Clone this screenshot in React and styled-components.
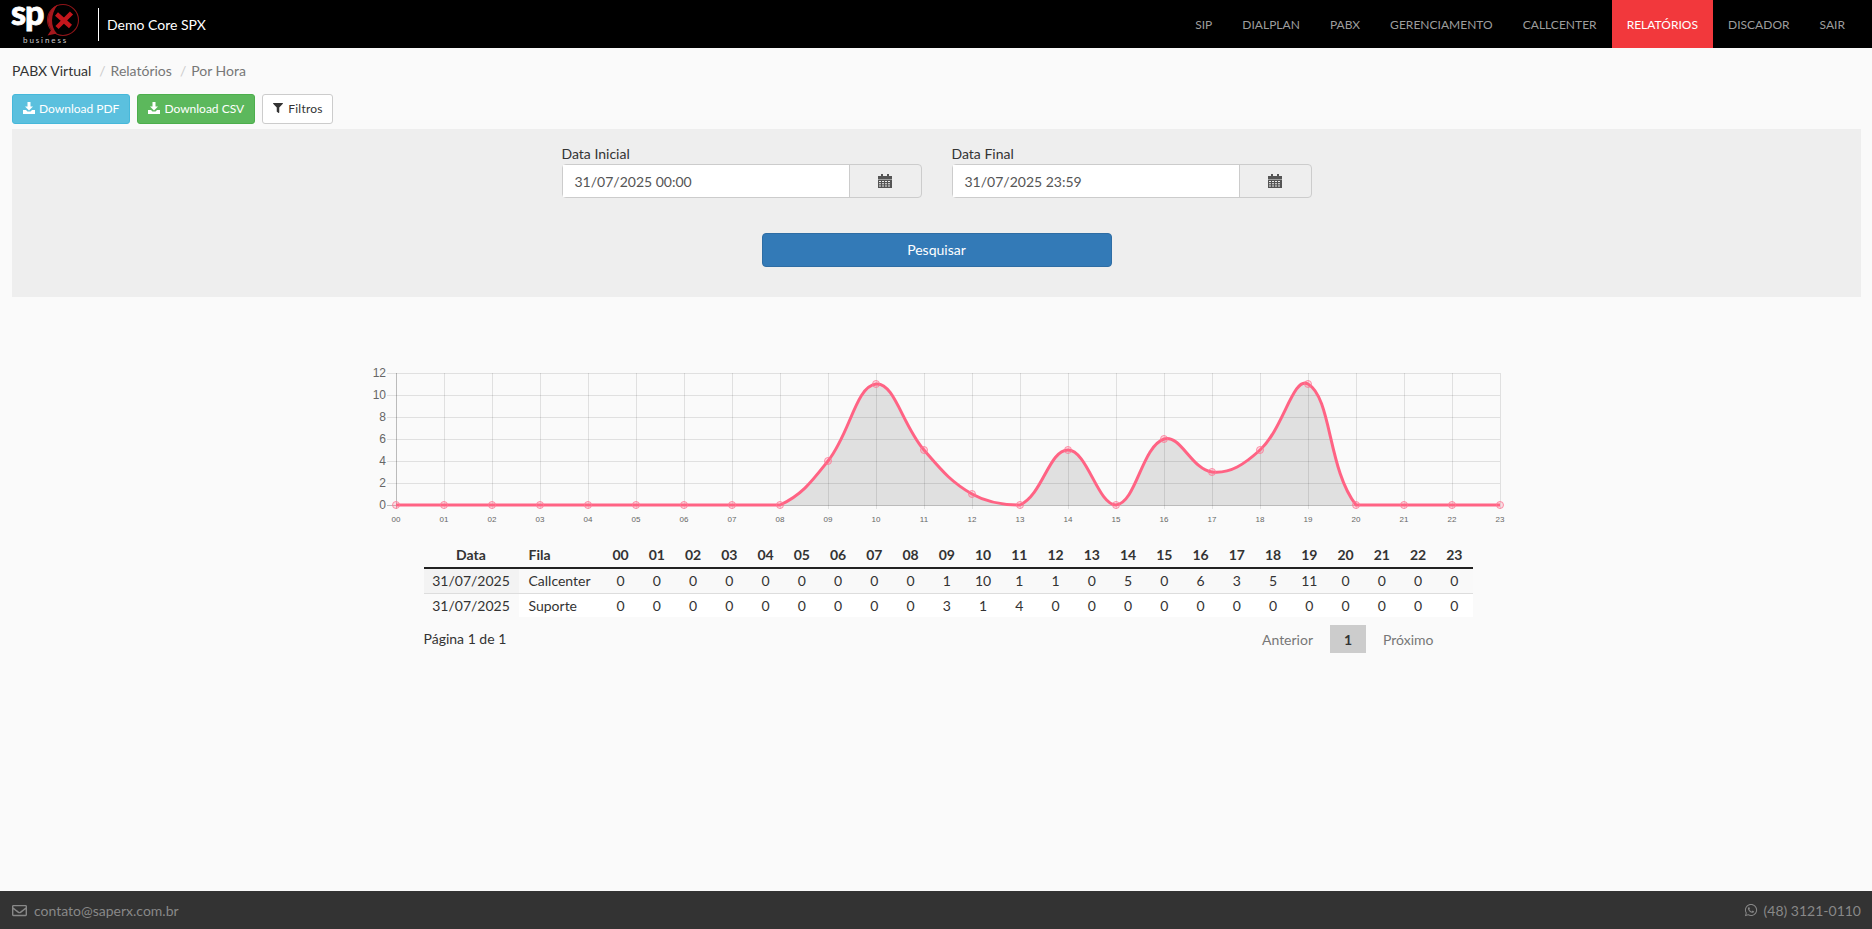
import React from 'react';
import styled, { createGlobalStyle } from 'styled-components';
import { FaRegEnvelope, FaWhatsapp, FaFilter } from 'react-icons/fa';

const Global = createGlobalStyle`
  * { box-sizing: border-box; }
  html, body { margin: 0; height: 100%; }
  body { background: #fafafa; color: #333; font-family: Lato, "Liberation Sans", sans-serif; font-size: 14px; }
  #root { height: 100%; }
`;

const Page = styled.div`display:flex;flex-direction:column;height:929px;`;
const Nav = styled.header`height:48px;background:#000;display:flex;align-items:stretch;flex:none;`;
const Brand = styled.div`display:flex;align-items:center;padding-left:12px;`;
const LogoSvg = styled.svg`display:block;overflow:visible;`;
const Divider = styled.span`width:1px;height:33px;background:#fff;margin:0 8px 0 20px;`;
const BrandName = styled.span`color:#fff;font-size:14px;`;
const Menu = styled.nav`display:flex;margin-left:auto;padding-right:12px;`;
const MenuItem = styled.a`display:flex;align-items:center;padding:0 15px;color:${p=>p.$active?'#fff':'#9d9d9d'};background:${p=>p.$active?'#f2383c':'transparent'};font-size:12px;letter-spacing:.02px;`;
const Content = styled.main`flex:1;padding:0 11px 0 12px;`;
const Crumbs = styled.div`display:flex;align-items:center;height:44px;margin-bottom:2px;font-size:14px;color:#777;`;
const CrumbHead = styled.span`color:#333;`;
const Slash = styled.span`color:#ccc;margin:0 5px 0 8px;`;
const Toolbar = styled.div`display:flex;gap:7px;`;
const ActionButton = styled.button`height:30px;padding:0 10px 2px;display:flex;align-items:center;gap:4px;border:1px solid ${p=>p.$border};border-radius:3px;background:${p=>p.$bg};color:${p=>p.$color};font:12px Lato,sans-serif;`;
const FilterButton = styled(ActionButton)`gap:5px;padding-right:9px;letter-spacing:.25px;`;
const Panel = styled.section`margin-top:5px;height:168px;background:#eee;padding-top:15px;`;
const Fields = styled.div`display:flex;justify-content:center;gap:30px;`;
const Field = styled.div`width:360px;`;
const FieldLabel = styled.label`display:block;font-size:14px;line-height:20px;`;
const InputGroup = styled.div`display:flex;height:34px;border:1px solid #ccc;border-radius:4px;`;
const DateInput = styled.div`flex:1;display:flex;align-items:center;padding-left:12px;background:#fff;color:#555;font-size:14px;`;
const Addon = styled.div`width:72px;display:flex;align-items:center;justify-content:center;border-left:1px solid #ccc;`;
const SearchRow = styled.div`display:flex;justify-content:center;margin-top:35px;`;
const SearchButton = styled.button`width:350px;height:34px;padding:0 0 2px;background:#337ab7;border:1px solid #2e6da4;border-radius:4px;color:#fff;font:14px Lato,sans-serif;`;
const ChartWrap = styled.div`width:1240px;margin:66px auto 0;`;
const ChartSvg = styled.svg`display:block;width:1240px;height:170px;`;
const TableWrap = styled.div`margin:8px 0 0 107px;width:1049px;`;
const Table = styled.table`border-collapse:collapse;table-layout:fixed;width:100%;font-size:14px;`;
const Th = styled.th`width:${p=>p.$w||'auto'};height:27px;padding:0;border-bottom:2px solid #222;text-align:${p=>p.$left?'left':'center'};padding-left:${p=>p.$left?'10px':'0'};font-size:14px;`;
const Td = styled.td`height:${p=>p.$last?'24px':'25px'};padding:0;padding-left:${p=>p.$left?'10px':'0'};text-align:${p=>p.$left?'left':'center'};white-space:nowrap;background:${p=>p.$bg};border-bottom:${p=>p.$last?'0':'1px solid #ddd'};`;
const Pager = styled.div`display:flex;justify-content:space-between;margin-top:8px;`;
const PageInfo = styled.span`line-height:20px;margin-top:4px;`;
const PageLinks = styled.div`display:flex;align-items:center;color:#777;margin-right:22px;`;
const PageLink = styled.span`padding:0 17px;`;
const PageNum = styled.span`width:36px;height:28px;display:flex;align-items:center;justify-content:center;background:#ccc;color:#333;font-weight:700;`;
const Footer = styled.footer`height:38px;flex:none;background:#333;color:#888;display:flex;align-items:center;justify-content:space-between;padding:0 11px 0 12px;font-size:14px;`;
const FootItem = styled.span`display:flex;align-items:center;gap:${p=>p.$gap||'7px'};`;

const nav=['SIP','DIALPLAN','PABX','GERENCIAMENTO','CALLCENTER','RELATÓRIOS','DISCADOR','SAIR'];
const hours=Array.from({length:24},(_,i)=>String(i).padStart(2,'0'));
const rows=[
 ['31/07/2025','Callcenter',[0,0,0,0,0,0,0,0,0,1,10,1,1,0,5,0,6,3,5,11,0,0,0,0]],
 ['31/07/2025','Suporte',[0,0,0,0,0,0,0,0,0,3,1,4,0,0,0,0,0,0,0,0,0,0,0,0]],
];
const totals=rows[0][2].map((v,i)=>v+rows[1][2][i]);

const OX=79, OY=10, STEP=48, UNIT=11;
const pts=totals.map((v,i)=>[OX+i*STEP,OY+132-v*UNIT]);
function curve(){
  const cps=pts.map((p,i)=>{
    const a=pts[Math.max(i-1,0)],b=pts[Math.min(i+1,pts.length-1)];
    const d1=Math.hypot(p[0]-a[0],p[1]-a[1]),d2=Math.hypot(b[0]-p[0],b[1]-p[1]);
    const s=d1+d2||1,f1=.4*d1/s,f2=.4*d2/s;
    const clamp=y=>Math.min(OY+132,Math.max(OY,y));
    return {p:[p[0]-f1*(b[0]-a[0]),clamp(p[1]-f1*(b[1]-a[1]))],n:[p[0]+f2*(b[0]-a[0]),clamp(p[1]+f2*(b[1]-a[1]))]};
  });
  let d=`M${pts[0][0]} ${pts[0][1]}`;
  for(let i=1;i<pts.length;i++){d+=` C${cps[i-1].n[0]} ${cps[i-1].n[1]} ${cps[i].p[0]} ${cps[i].p[1]} ${pts[i][0]} ${pts[i][1]}`;}
  return d;
}
const line=curve();

function Chart(){
  return <ChartSvg viewBox="0 0 1240 170">
    {hours.map((h,i)=><line key={h} x1={OX+i*STEP+.5} x2={OX+i*STEP+.5} y1={OY} y2={OY+136} stroke={i===0?'rgba(0,0,0,.25)':'rgba(0,0,0,.1)'}/>)}
    {[0,2,4,6,8,10,12].map(v=><g key={v}>
      <line x1={OX-9} x2={OX+1104} y1={OY+132-v*UNIT+.5} y2={OY+132-v*UNIT+.5} stroke={v===0?'rgba(0,0,0,.25)':'rgba(0,0,0,.1)'}/>
      <text x={OX-10} y={OY+132-v*UNIT+3.5} textAnchor="end" fontSize="12" fill="#666" fontFamily="Liberation Sans, sans-serif">{v}</text>
    </g>)}
    <path d={line+` L${OX+1104} ${OY+132} L${OX} ${OY+132} Z`} fill="rgba(0,0,0,.1)"/>
    <path d={line} fill="none" stroke="#ff6384" strokeWidth="3"/>
    {pts.map((p,i)=><circle key={i} cx={p[0]} cy={p[1]} r="3.500" fill="rgba(255,99,132,.2)" stroke="rgba(255,120,150,.8)" strokeWidth="1"/>)}
    {hours.map((h,i)=><text key={h} x={OX+i*STEP} y={OY+149} textAnchor="middle" fontSize="8" fill="#666" fontFamily="Liberation Sans, sans-serif">{h}</text>)}
  </ChartSvg>;
}

const Calendar=()=><svg width="14" height="14" viewBox="0 0 14 14" fill="#555">
  <path d="M3 0h2v2H3zM9 0h2v2H9z"/><path d="M0 2h14v3H0z"/>
  <path fillRule="evenodd" d="M0 5.600h14V14H0zM1 7v1h2V7zm3 0v1h2V7zm3 0v1h2V7zm3 0v1h2V7zM1 9.200v1h2v-1zm3 0v1h2v-1zm3 0v1h2v-1zm3 0v1h2v-1zM1 11.400v1h2v-1zm3 0v1h2v-1zm3 0v1h2v-1zm3 0v1h2v-1z"/>
</svg>;
const Download=()=><svg width="12" height="12" viewBox="0 0 12 12" fill="#fff">
  <path d="M4.500 0h3v4.500H10L6 8.500 2 4.500h2.500z"/><path d="M0 8h3l1.500 1.500h3L9 8h3v4H0z"/>
</svg>;
const Logo=()=><LogoSvg width="66" height="48" viewBox="0 0 66 48">
  <circle cx="51" cy="20" r="15.500" fill="none" stroke="#8f1418" strokeWidth="1.100"/>
  <path d="M46 4.500C36 9 33 22 39.500 29.500L35.500 35.500L45 33.500C38.500 27 38 14 46 4.500Z" fill="#a5181d"/>
  <path d="M44.500 14L58.500 26.500M59.500 13L45 27.500" stroke="#c4161c" strokeWidth="4.500" fill="none"/>
  <text x="-1" y="25" fontSize="34" fontWeight="900" fill="#fff" stroke="#fff" strokeWidth=".8" fontFamily="Lato, sans-serif" letterSpacing="-1">sp</text>
  <text x="11" y="43" fontSize="8" fill="#ccc" fontFamily="Lato, sans-serif" letterSpacing="1.900">business</text>
</LogoSvg>;

export default function App(){
  return <Page><Global/>
    <Nav>
      <Brand><Logo/><Divider/><BrandName>Demo Core SPX</BrandName></Brand>
      <Menu>{nav.map(n=><MenuItem key={n} $active={n==='RELATÓRIOS'}>{n}</MenuItem>)}</Menu>
    </Nav>
    <Content>
      <Crumbs><CrumbHead>PABX Virtual</CrumbHead><Slash>/</Slash>Relatórios<Slash>/</Slash>Por Hora</Crumbs>
      <Toolbar>
        <ActionButton $bg="#5bc0de" $border="#46b8da" $color="#fff"><Download/>Download PDF</ActionButton>
        <ActionButton $bg="#5cb85c" $border="#4cae4c" $color="#fff"><Download/>Download CSV</ActionButton>
        <FilterButton $bg="#fff" $border="#ccc" $color="#333"><FaFilter size={10}/>Filtros</FilterButton>
      </Toolbar>
      <Panel>
        <Fields>
          <Field><FieldLabel>Data Inicial</FieldLabel><InputGroup><DateInput>31/07/2025 00:00</DateInput><Addon><Calendar/></Addon></InputGroup></Field>
          <Field><FieldLabel>Data Final</FieldLabel><InputGroup><DateInput>31/07/2025 23:59</DateInput><Addon><Calendar/></Addon></InputGroup></Field>
        </Fields>
        <SearchRow><SearchButton>Pesquisar</SearchButton></SearchRow>
      </Panel>
      <ChartWrap>
        <Chart/>
        <TableWrap>
          <Table>
            <thead><tr><Th $w="95px">Data</Th><Th $left $w="84px">Fila</Th>{hours.map(h=><Th key={h}>{h}</Th>)}</tr></thead>
            <tbody>{rows.map((r,ri)=><tr key={r[1]}>
              <Td $last={ri===1} $bg={ri?'#fafafa':'#f3f3f3'}>{r[0]}</Td>
              <Td $left $last={ri===1} $bg={ri?'#fff':'#f9f9f9'}>{r[1]}</Td>
              {r[2].map((v,i)=><Td key={i} $last={ri===1} $bg={ri?'#fff':'#f9f9f9'}>{v}</Td>)}
            </tr>)}</tbody>
          </Table>
          <Pager><PageInfo>Página 1 de 1</PageInfo><PageLinks><PageLink>Anterior</PageLink><PageNum>1</PageNum><PageLink>Próximo</PageLink></PageLinks></Pager>
        </TableWrap>
      </ChartWrap>
    </Content>
    <Footer><FootItem><FaRegEnvelope size={15}/>contato@saperx.com.br</FootItem><FootItem $gap="6px"><FaWhatsapp size={14}/>(48) 3121-0110</FootItem></Footer>
  </Page>;
}
